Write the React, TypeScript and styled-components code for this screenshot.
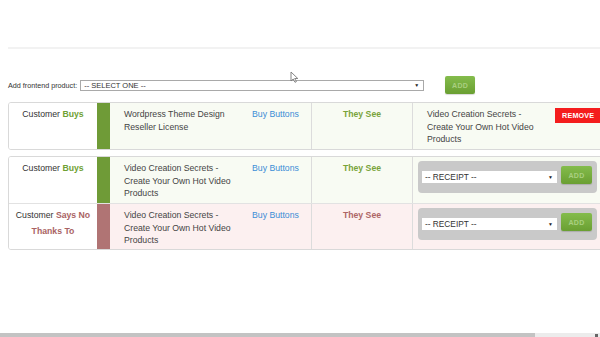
import React from "react";
import styled, { createGlobalStyle } from "styled-components";

type Tone = "buy" | "no";

const tones: Record<Tone, { bar: string; tint: string; word: string; see: string }> = {
  buy: { bar: "#6f9b37", tint: "#f8fbf3", word: "#6fa134", see: "#78a33b" },
  no: { bar: "#b07474", tint: "#fcf0f0", word: "#a96363", see: "#ad6666" },
};

const Global = createGlobalStyle`
  html, body { margin: 0; padding: 0; background: #fff; overflow: hidden; }
  body { font-family: "Liberation Sans", Arial, sans-serif; }
  * { box-sizing: border-box; }
`;

const Page = styled.div`
  position: relative;
  width: 600px;
  height: 337px;
  overflow: hidden;
  display: flex;
  flex-direction: column;
`;

const TopSpace = styled.div`
  height: 47px;
  flex: none;
`;

const Rule = styled.div`
  margin-left: 8px;
  height: 2px;
  background: #f2f2f2;
  flex: none;
`;

const Toolbar = styled.div`
  display: flex;
  align-items: center;
  margin: 27px 0 0 8px;
  height: 18px;
  flex: none;
`;

const Label = styled.span`
  font-size: 7.2px;
  color: #333;
  margin-right: 3px;
  white-space: nowrap;
`;

const FakeSelect = styled.div<{ $w: number; $h: number; $border?: boolean; $size: number }>`
  width: ${(p) => p.$w}px;
  height: ${(p) => p.$h}px;
  border: ${(p) => (p.$border ? "1px solid #a9a9a9" : "none")};
  background: #fff;
  display: flex;
  align-items: center;
  justify-content: space-between;
  padding: 0 4px 0 3px;
  font-size: ${(p) => p.$size}px;
  color: #333;
  flex: none;
  white-space: nowrap;
`;

const Arrow = styled.span`
  font-size: 5px;
  color: #222;
`;

const AddButton = styled.div<{ $w: number; $h: number; $ml: number }>`
  width: ${(p) => p.$w}px;
  height: ${(p) => p.$h}px;
  margin-left: ${(p) => p.$ml}px;
  border-radius: 2px;
  background: linear-gradient(#84bc4c, #6a9f32);
  box-shadow: 0 1px 1px rgba(0, 0, 0, 0.15);
  color: #a9cf80;
  font-weight: bold;
  font-size: 7px;
  letter-spacing: 0.3px;
  display: flex;
  align-items: center;
  justify-content: center;
  flex: none;
`;

const Table = styled.div<{ $mt: number }>`
  margin: ${(p) => p.$mt}px 0 0 8px;
  width: 620px;
  border: 1px solid #d9d9d9;
  border-radius: 3px;
  overflow: hidden;
  flex: none;
`;

const Row = styled.div`
  display: grid;
  grid-template-columns: 88px 13px 137px 64px 101px 1fr;
  height: 46px;
  font-size: 8.7px;
  & + & {
    border-top: 1px solid #e2e2e2;
  }
`;

const WhoCell = styled.div`
  background: #fff;
  text-align: center;
  padding: 3px 6px 0;
  line-height: 16px;
  color: #333;
`;

const Word = styled.b<{ $tone: Tone }>`
  color: ${(p) => tones[p.$tone].word};
`;

const Bar = styled.div<{ $tone: Tone }>`
  background: ${(p) => tones[p.$tone].bar};
`;

const ProductCell = styled.div<{ $tone: Tone }>`
  background: ${(p) => tones[p.$tone].tint};
  padding: 5px 8px 0 14px;
  line-height: 12.5px;
  color: #444;
`;

const BuyCell = styled.div<{ $tone: Tone }>`
  background: ${(p) => tones[p.$tone].tint};
  padding: 5px 0 0 5px;
  line-height: 12.5px;
  color: #3b8dd6;
  white-space: nowrap;
`;

const SeeCell = styled.div<{ $tone: Tone }>`
  background: ${(p) => tones[p.$tone].tint};
  border-left: 1px solid #dcdcdc;
  padding-top: 5px;
  line-height: 12.5px;
  text-align: center;
  font-weight: bold;
  color: ${(p) => tones[p.$tone].see};
`;

const LastCell = styled.div<{ $tone: Tone; $pad: string }>`
  background: ${(p) => tones[p.$tone].tint};
  border-left: 1px solid #dcdcdc;
  padding: ${(p) => p.$pad};
  display: flex;
  align-items: flex-start;
`;

const ResultText = styled.div`
  width: 120px;
  line-height: 12.5px;
  color: #444;
  flex: none;
`;

const RemoveButton = styled.div`
  margin-left: 8px;
  height: 15px;
  width: 52px;
  padding-left: 7px;
  background: #f41d1d;
  color: #fff;
  font-weight: bold;
  font-size: 7.2px;
  letter-spacing: 0.2px;
  line-height: 15px;
  flex: none;
`;

const ReceiptPanel = styled.div`
  width: 179px;
  height: 32px;
  background: #c9c9c9;
  border-radius: 4px;
  padding: 5px 4px 0 4px;
  display: flex;
  align-items: flex-start;
  flex: none;
`;

const ReceiptSelectWrap = styled.div`
  margin-top: 5px;
`;

const Scrollbar = styled.div`
  margin-top: auto;
  height: 4px;
  background: #ececec;
  display: flex;
  justify-content: space-between;
  flex: none;
`;

const Thumb = styled.div`
  width: 535px;
  height: 4px;
  background: #c3c3c3;
`;

const ScrollArrow = styled.div`
  width: 3px;
  height: 3px;
  margin: 1px 2px 0 0;
  background: #666;
`;

const Cursor = styled.svg`
  position: absolute;
  left: 290px;
  top: 71px;
`;

function Who({ tone }: { tone: Tone }) {
  return (
    <WhoCell>
      Customer{" "}
      {tone === "buy" ? <Word $tone={tone}>Buys</Word> : <Word $tone={tone}>Says No Thanks To</Word>}
    </WhoCell>
  );
}

function Receipt() {
  return (
    <ReceiptPanel>
      <ReceiptSelectWrap>
        <FakeSelect $w={135} $h={12} $size={8.3}>
          <span>-- RECEIPT --</span>
          <Arrow>▼</Arrow>
        </FakeSelect>
      </ReceiptSelectWrap>
      <AddButton $w={31} $h={18} $ml={4}>ADD</AddButton>
    </ReceiptPanel>
  );
}

const VCS = "Video Creation Secrets - Create Your Own Hot Video Products";

export default function App() {
  return (
    <Page>
      <Global />
      <TopSpace />
      <Rule />
      <Toolbar>
        <Label>Add frontend product:</Label>
        <FakeSelect $w={344} $h={11} $border $size={7.5}>
          <span>-- SELECT ONE --</span>
          <Arrow>▼</Arrow>
        </FakeSelect>
        <AddButton $w={30} $h={18} $ml={21}>ADD</AddButton>
      </Toolbar>

      <Table $mt={8}>
        <Row>
          <Who tone="buy" />
          <Bar $tone="buy" />
          <ProductCell $tone="buy">Wordpress Theme Design Reseller License</ProductCell>
          <BuyCell $tone="buy">Buy Buttons</BuyCell>
          <SeeCell $tone="buy">They See</SeeCell>
          <LastCell $tone="buy" $pad="5px 0 0 14px">
            <ResultText>{VCS}</ResultText>
            <RemoveButton>REMOVE</RemoveButton>
          </LastCell>
        </Row>
      </Table>

      <Table $mt={6}>
        <Row>
          <Who tone="buy" />
          <Bar $tone="buy" />
          <ProductCell $tone="buy">{VCS}</ProductCell>
          <BuyCell $tone="buy">Buy Buttons</BuyCell>
          <SeeCell $tone="buy">They See</SeeCell>
          <LastCell $tone="buy" $pad="4px 0 0 5px">
            <Receipt />
          </LastCell>
        </Row>
        <Row>
          <Who tone="no" />
          <Bar $tone="no" />
          <ProductCell $tone="no">{VCS}</ProductCell>
          <BuyCell $tone="no">Buy Buttons</BuyCell>
          <SeeCell $tone="no">They See</SeeCell>
          <LastCell $tone="no" $pad="4px 0 0 5px">
            <Receipt />
          </LastCell>
        </Row>
      </Table>

      <Scrollbar>
        <Thumb />
        <ScrollArrow />
      </Scrollbar>

      <Cursor width="9" height="12" viewBox="0 0 9 12">
        <path d="M1 1 L1 10 L3.2 8 L5 11.3 L6.4 10.6 L4.7 7.5 L7.8 7.5 Z" fill="#fff" stroke="#777" strokeWidth="0.9" strokeLinejoin="round" />
      </Cursor>
    </Page>
  );
}
